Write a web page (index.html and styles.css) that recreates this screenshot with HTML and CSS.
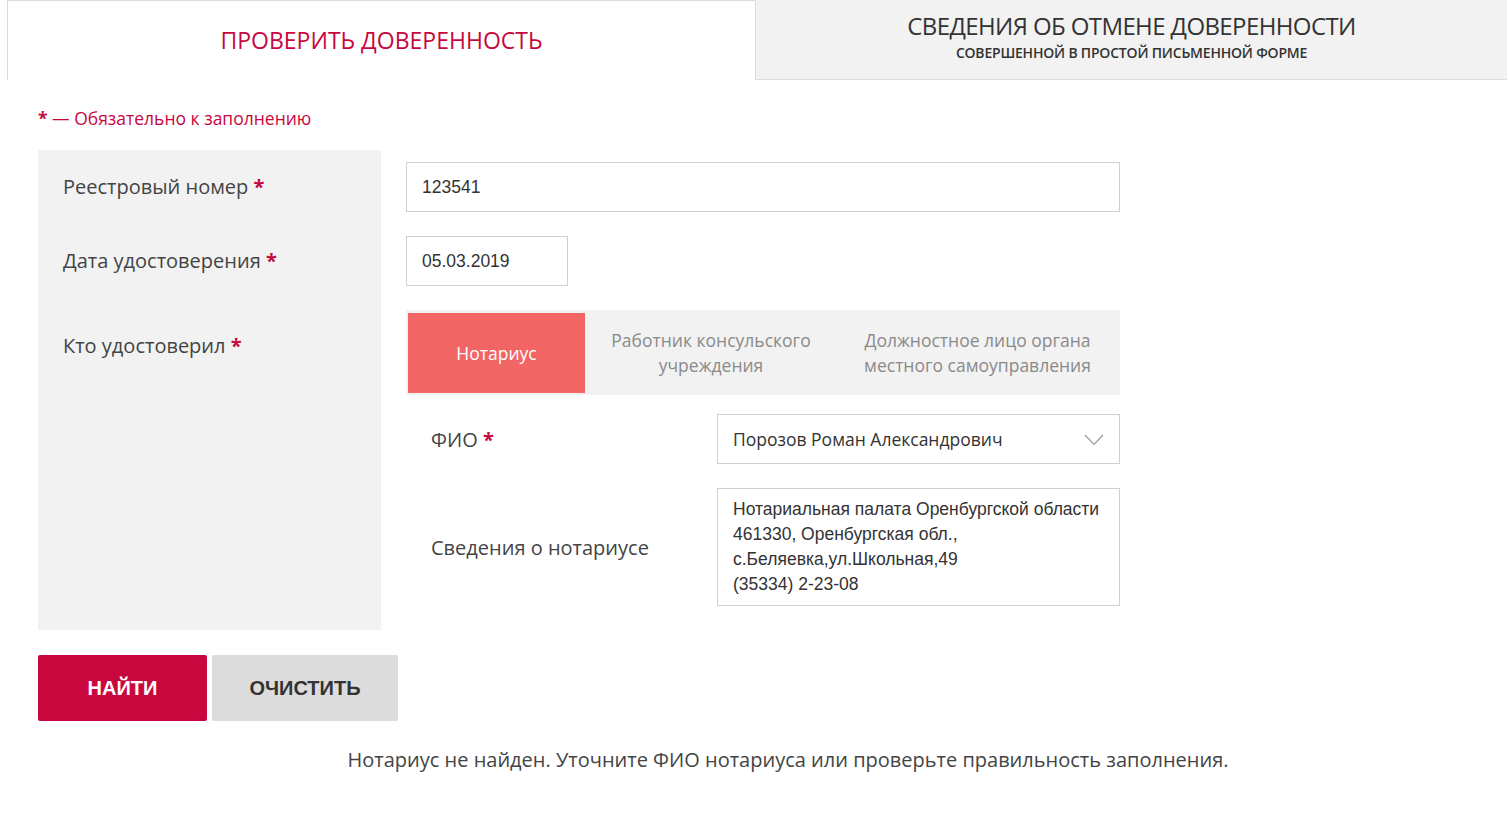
FILE: index.html
```html
<!DOCTYPE html>
<html lang="ru">
<head>
    <meta charset="UTF-8">
    <meta name="viewport" content="width=device-width, initial-scale=1.0">
    <title>Проверить доверенность</title>
    <link rel="stylesheet" href="styles.css">
</head>
<body>

<div class="tabs">
    <div class="tab tab-active">Проверить доверенность</div>
    <div class="tab">
        <div class="tab-title">Сведения об отмене доверенности</div>
        <div class="tab-sub">совершенной в простой письменной форме</div>
    </div>
</div>

<div class="content">
    <div class="required-note"><span class="star">*</span> — Обязательно к заполнению</div>

    <div class="form">
        <div class="row row-first">
            <div class="row-label">Реестровый номер <span class="star">*</span></div>
            <div class="row-field">
                <input class="input" value="123541">
            </div>
        </div>
        <div class="row">
            <div class="row-label">Дата удостоверения <span class="star">*</span></div>
            <div class="row-field">
                <input class="input input-date" value="05.03.2019">
            </div>
        </div>
        <div class="row">
            <div class="row-label row-label-toggle">Кто удостоверил <span class="star">*</span></div>
            <div class="row-field">
                <div class="toggle">
                    <div class="toggle-item toggle-active">Нотариус</div>
                    <div class="toggle-item toggle-consul">Работник консульского<br>учреждения</div>
                    <div class="toggle-item toggle-local">Должностное лицо органа<br>местного самоуправления</div>
                </div>

                <div class="sub-row">
                    <div class="sub-label">ФИО <span class="star">*</span></div>
                    <div class="select">
                        <span>Порозов Роман Александрович</span>
                        <svg class="chevron" width="20" height="12" viewBox="0 0 20 12">
                            <polyline points="1,1 10,10.5 19,1" fill="none" stroke="#9a9a9a" stroke-width="1.2"/>
                        </svg>
                    </div>
                </div>

                <div class="sub-row sub-row-info">
                    <div class="sub-label">Сведения о нотариусе</div>
                    <div class="info">
                        Нотариальная палата Оренбургской области<br>
                        461330, Оренбургская обл.,<br>
                        с.Беляевка,ул.Школьная,49<br>
                        (35334) 2-23-08
                    </div>
                </div>
            </div>
        </div>
    </div>

    <div class="buttons">
        <button class="btn btn-find">Найти</button>
        <button class="btn btn-clear">Очистить</button>
    </div>

    <div class="message">Нотариус не найден. Уточните ФИО нотариуса или проверьте правильность заполнения.</div>
</div>

</body>
</html>
```

FILE: styles.css
```css
body {
    margin: 0;
    padding: 0;
    background: #fff;
    font-family: "Open Sans", "Liberation Sans", sans-serif;
    color: #444;
}
.tabs {
    display: flex;
    padding-left: 7px;
    height: 80px;
}
.tab {
    box-sizing: border-box;
    height: 80px;
    text-transform: uppercase;
    text-align: center;
}
.tab-active {
    width: 749px;
    border: 1px solid #dcdcdc;
    border-bottom: none;
    color: #c8073f;
    font-size: 23px;
    line-height: 78px;
}
.tab:not(.tab-active) {
    flex: 1;
    background: #f2f2f2;
    border-bottom: 1px solid #dcdcdc;
    color: #333;
    padding-top: 10px;
    margin-right: 1px;
}
.tab-title {
    font-size: 24px;
    letter-spacing: -0.6px;
    line-height: 32px;
}
.tab-sub {
    margin-top: 2px;
    font-size: 14px;
    font-weight: 600;
    letter-spacing: -0.2px;
    line-height: 18px;
}
.content {
    padding: 23px 38px 0;
}
.star {
    color: #c8073f;
    font-weight: 700;
}
.required-note {
    color: #c8073f;
    font-size: 17.5px;
    line-height: 30px;
    margin-bottom: 17px;
}
.row {
    display: flex;
    gap: 25px;
}
.row-label {
    box-sizing: border-box;
    width: 343px;
    background: #f2f2f2;
    padding-left: 25px;
    font-size: 20px;
    line-height: 50px;
}
.row-label-toggle {
    padding-top: 11px;
}
.row-field {
    width: 714px;
    padding-bottom: 24px;
}
.row-first .row-label,
.row-first .row-field {
    padding-top: 12px;
}
.input {
    box-sizing: border-box;
    display: block;
    width: 714px;
    height: 50px;
    border: 1px solid #cfcfcf;
    padding: 0 15px;
    font-family: "Liberation Sans", Arial, sans-serif;
    font-size: 17.5px;
    color: #333;
    outline: none;
}
.input-date {
    width: 162px;
}
.toggle {
    display: flex;
    height: 85px;
    box-sizing: border-box;
    background: #f2f2f2;
    padding: 3px 2px 2px 2px;
    margin-bottom: 19px;
}
.toggle-item {
    display: flex;
    align-items: center;
    justify-content: center;
    text-align: center;
    color: #8a8a8a;
    font-size: 17.5px;
    line-height: 25px;
}
.toggle-active {
    width: 177px;
    background: #f26565;
    color: #fff;
}
.toggle-consul {
    width: 252px;
}
.toggle-local {
    flex: 1;
}
.sub-row {
    display: flex;
    align-items: center;
}
.sub-row-info {
    margin-top: 24px;
}
.sub-label {
    width: 311px;
    box-sizing: border-box;
    padding-left: 25px;
    font-size: 20px;
}
.select {
    box-sizing: border-box;
    flex: 1;
    height: 50px;
    border: 1px solid #cfcfcf;
    display: flex;
    align-items: center;
    justify-content: space-between;
    padding: 0 15px;
    color: #333;
    font-size: 17.5px;
}
.chevron {
    margin-top: 2px;
}
.info {
    box-sizing: border-box;
    flex: 1;
    height: 118px;
    border: 1px solid #cfcfcf;
    padding: 8px 15px 6px;
    font-family: "Liberation Sans", Arial, sans-serif;
    font-size: 17.5px;
    line-height: 25px;
    color: #333;
}
.buttons {
    display: flex;
    gap: 5px;
    margin-top: 25px;
}
.btn {
    height: 66px;
    border: none;
    border-radius: 2px;
    font-family: "Liberation Sans", Arial, sans-serif;
    font-weight: 700;
    font-size: 20px;
    text-transform: uppercase;
    cursor: pointer;
}
.btn-find {
    width: 169px;
    background: #c8073f;
    color: #fff;
}
.btn-clear {
    width: 186px;
    background: #dcdcdc;
    color: #333;
}
.message {
    text-align: center;
    padding-left: 68px;
    margin-top: 24px;
    font-size: 20px;
    line-height: 30px;
}
```
